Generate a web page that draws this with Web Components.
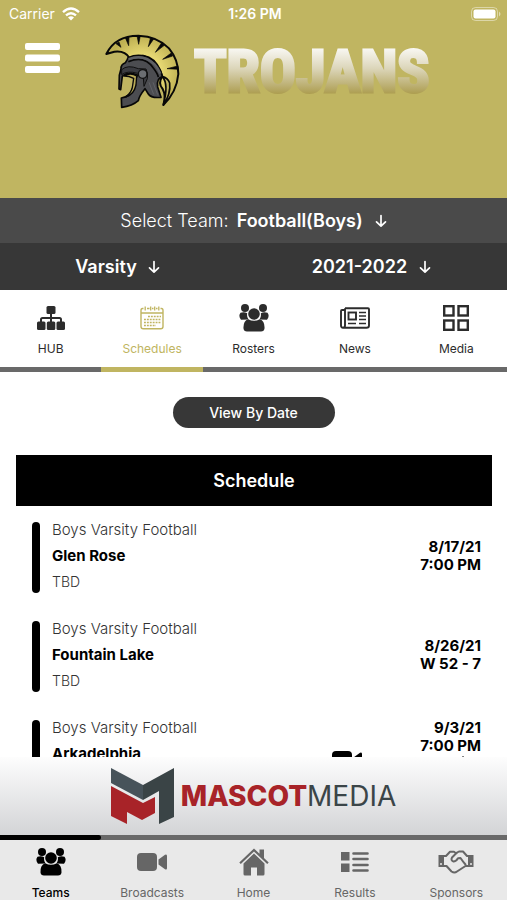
<!DOCTYPE html>
<html lang="en">
<head>
<meta charset="utf-8">
<meta name="viewport" content="width=device-width, initial-scale=1">
<title>Trojans</title>
<style>
  body {
    margin: 0;
    font-family: Inter, "Liberation Sans", sans-serif;
    color: #000;
    --gold: #c0b561;
    --dark: #373737;
    --line: #696969;
  }
</style>
</head>
<body>
<trojans-app></trojans-app>

<script>
// Icon drawings, each with its own viewBox
const icons = {
  wifi: ['0 0 18 14', `<g fill="none" stroke="currentColor" stroke-width="2.4"><path d="M1 5.2Q9-2 17 5.2"/><path d="M4 8.4Q9 4 14 8.4"/></g><path d="M6 10.4Q9 8 12 10.4L9 13.6Z"/>`],
  battery: ['0 0 30 14', `<rect x=".5" y=".5" width="26" height="13" rx="4" fill="none" stroke="currentColor" opacity=".45"/><rect x="2.5" y="2.5" width="22" height="9" rx="2"/><path d="M28 4.5q3 2.5 0 5z" opacity=".5"/>`],
  menu: ['0 0 35 30', `<rect width="35" height="7" rx="2"/><rect y="11.5" width="35" height="7" rx="2"/><rect y="23" width="35" height="7" rx="2"/>`],
  down: ['0 0 12 14', `<path d="M6 1.5V12M1.5 7.8L6 12.2L10.5 7.8" fill="none" stroke="currentColor" stroke-width="1.7" stroke-linecap="round" stroke-linejoin="round"/>`],
  hub: ['0 0 28 24', `<rect x="9.500" y="0" width="9" height="8" rx="1.5"/><rect x="0" y="15.500" width="8.500" height="8.500" rx="1.5"/><rect x="9.800" y="15.500" width="8.500" height="8.500" rx="1.5"/><rect x="19.500" y="15.500" width="8.500" height="8.500" rx="1.5"/><path d="M14 7V17M4 17V13.5Q4 12 5.500 12H22.500Q24 12 24 13.500V17" fill="none" stroke="currentColor" stroke-width="2"/>`],
  calendar: ['0 0 24 24', `<g fill="none" stroke="currentColor"><path d="M3.500 2.500H2.500Q1 2.500 1 4.500V20.500Q1 22.800 3.300 22.800H20.700Q23 22.800 23 20.500V4.500Q23 2.500 21.500 2.500H20.500M7 2.500H9.500M12 2.500H13.500M16 2.500H17.500M1 7H23" stroke-width="1.400"/><path d="M5.200 .5V4.500M10.700 .5V4.500M14.700 .5V4.500M18.800 .5V4.500" stroke-width="1.300"/><path d="M8 10.500H21M4 13.500H21M4 16.500H21M4 19.500H16" stroke-width="1.700" stroke-dasharray="1.900 1"/></g>`],
  people: ['0 0 30 28', `<circle cx="6" cy="4" r="4"/><circle cx="24" cy="4" r="4"/><path d="M1.500 8.800Q5 7.500 8.200 9.200Q7.500 13 9.500 15.500L2 15.700Q-1 12 1.500 8.800ZM28.500 8.800Q25 7.500 21.800 9.200Q22.500 13 20.500 15.500L28 15.700Q31 12 28.500 8.800Z"/><circle cx="15" cy="10" r="5.800"/><path d="M9.200 15.200Q15 18.500 20.800 15.200Q26 17 25.500 24.500Q25.200 27.500 22 27.500H8Q4.800 27.500 4.500 24.500Q4 17 9.200 15.200Z"/>`],
  news: ['0 0 30 22', `<g fill="none" stroke="currentColor"><path d="M5 1.200H28Q29 1.200 29 2.200V18.500Q29 20.800 26.500 20.800H3Q1 20.800 1 18.500V4Q1 3 2 3H5M5 1.200V18.500Q5 20.500 3 20.800" stroke-width="1.900"/><rect x="8.500" y="5.500" width="7.500" height="7" stroke-width="1.900"/><path d="M19 5.500H26M19 9H26M19 12.500H26M8 16.500H16M19 16.500H26" stroke-width="1.700"/></g>`],
  grid: ['0 0 26 26', `<g fill="none" stroke="currentColor" stroke-width="2.400"><rect x="1.200" y="1.200" width="9.300" height="9.300"/><rect x="15.500" y="1.200" width="9.300" height="9.300"/><rect x="1.200" y="15.500" width="9.300" height="9.300"/><rect x="15.500" y="15.500" width="9.300" height="9.300"/></g>`],
  video: ['0 0 30 18', `<rect width="20" height="18" rx="4"/><path d="M21.500 6.500L28 1.800Q30 .8 30 3V15Q30 17.200 28 16.200L21.500 11.500Z"/>`],
  home: ['0 0 30 28', `<path d="M15 .5L.3 14.500L1.800 16L15 3.500L28.200 16L29.700 14.500L25 10V1.500H20.500V5.700Z"/><path d="M15 5.500L4.500 15.500V26Q4.500 27.500 6 27.500H12V19.500H18V27.500H24Q25.500 27.500 25.500 26V15.500Z"/>`],
  results: ['0 0 28 20', `<rect width="8.500" height="8.500"/><rect y="11.500" width="8.500" height="8.500"/><path d="M12.500 1.500H26.500M12.500 7H26.500M12.500 13H26.500M12.500 18.500H26.500" stroke="currentColor" stroke-width="2.600" stroke-linecap="round"/>`],
  handshake: ['0 0 36 24', `<path d="M.5 5H6V17H.5ZM30 5H35.500V17H30Z"/><circle cx="3" cy="14" r="1" fill="#e9e9e9"/><circle cx="33" cy="14" r="1" fill="#e9e9e9"/><g fill="none" stroke="currentColor" stroke-width="2" stroke-linejoin="round" stroke-linecap="round"><path d="M6 6H8L12 1.800H16L18 3.200L21 1.500H25L29 6H30M6 16H8.500L13.500 21.500Q16.500 23.500 19 21.500L27.500 16H30"/><path d="M18.500 3L14 7.500Q12.500 10.500 15.500 11.500Q18 11.500 20 8.200L22.500 8Q24.500 11 27.500 14.500"/></g>`],
  ticket: ['0 0 34 30', `<path d="M16 1L19 4Q18 7 21 8L24 7L30 13L15 28L9 22Q11 19 8 17L2 16Z"/>`]
};

// Attach an open shadow root filled from a template
const attach = (el, html) => {
  const template = document.createElement("template");
  template.innerHTML = html;
  el.attachShadow({ mode: "open" });
  el.shadowRoot.appendChild(template.content.cloneNode(true));
};

class AppIcon extends HTMLElement {
  connectedCallback() {
    if (this.shadowRoot) return;
    const [box, shapes] = icons[this.getAttribute("name")];
    const [, , w, h] = box.split(" ");
    attach(this, `
      <style>
        :host { display: inline-flex; flex: none; }
        svg { display: block; fill: currentColor; }
      </style>
      <svg viewBox="${box}" width="${w}" height="${h}" aria-hidden="true">${shapes}</svg>
    `);
  }
}
customElements.define("app-icon", AppIcon);

class StatusBar extends HTMLElement {
  constructor() {
    super();
    attach(this, `
      <style>
        :host {
          display: grid;
          grid-template-columns: 1fr auto 1fr;
          align-items: center;
          height: 27px;
          padding: 0 6px 0 9px;
          font-size: 14px;
          color: #fff;
        }
        .carrier { display: flex; align-items: center; gap: 7px; }
        .time { font-weight: 600; }
        .battery { display: flex; justify-content: flex-end; }
      </style>
      <div class="carrier"><span>Carrier</span><app-icon name="wifi"></app-icon></div>
      <div class="time">1:26 PM</div>
      <div class="battery"><app-icon name="battery"></app-icon></div>
    `);
  }
}
customElements.define("status-bar", StatusBar);

class TeamHeader extends HTMLElement {
  constructor() {
    super();
    attach(this, `
      <style>
        :host { display: block; height: 198px; background: var(--gold); }
        .row { display: flex; align-items: flex-start; padding: 7px 25px; }
        button {
          margin: 9px 45px 0 0;
          padding: 0;
          border: 0;
          background: none;
          color: #fff;
          display: flex;
        }
        .helmet { flex: none; margin-right: 12px; }
        .name { flex: none; }
      </style>
      <status-bar></status-bar>
      <div class="row">
        <button type="button" aria-label="Menu"><app-icon name="menu"></app-icon></button>
        <svg class="helmet" viewBox="30 25 225 225" width="75" height="75" aria-hidden="true">
          <defs>
            <radialGradient id="crest" gradientUnits="userSpaceOnUse" cx="145" cy="140" r="110">
              <stop offset=".5" stop-color="#e6d873"/><stop offset="1" stop-color="#beb052"/>
            </radialGradient>
          </defs>
          <path d="M34 85Q60 30 130 30Q188 32 222 68Q250 102 250 145Q245 200 205 238Q214 210 203 190Q188 172 202 152L196 135Q180 96 145 90L103 96Q90 74 58 78Z" fill="url(#crest)" stroke="#080808" stroke-width="6" stroke-linejoin="round"/>
          <path d="M202 153Q222 175 205 238Q228 205 224 172Q218 156 202 153Z" fill="#c0b561" stroke="#080808" stroke-width="5"/>
          <path d="M63 54L78 65L72 49ZM91 36L101 60L102 34ZM126 30L131 56L136 30ZM167 35L160 63L176 40ZM200 51L181 80L208 59ZM229 82L203 101L233 91ZM248 121L216 129L250 131Z" fill="#080808" stroke="#080808" stroke-width="2"/>
          <path d="M78 130Q77 116 91 111Q98 101 99 96Q140 78 175 106Q196 126 202 153Q184 158 188 184L198 215Q168 218 160 205L150 189Q132 211 130 225Q112 241 80 245L79 217Q107 213 112 190L127 148Q99 136 82 151L77 192L72 190L73 149Z" fill="#4c4d51" stroke="#080808" stroke-width="5" stroke-linejoin="round"/>
          <path d="M100 108Q148 88 175 127Q188 144 190 154" fill="none" stroke="#080808" stroke-width="5"/>
          <path d="M101 100Q147 84 179 116Q191 130 196 144" fill="none" stroke="#5e6064" stroke-width="7"/>
          <path d="M80 132Q98 116 130 129L153 130Q160 143 157 159L147 182L145 157L128 143Q97 134 80 147Z" fill="#3b3c41" stroke="#101010" stroke-width="3"/>
          <path d="M85 151Q107 139 125 151L123 178Q117 207 92 214Q112 199 113 179L116 158Q100 150 85 151Z" fill="#b9aa58" stroke="#080808" stroke-width="4"/>
          <circle cx="143" cy="145" r="13" fill="#6b6e72" stroke="#111" stroke-width="4"/>
          <path d="M162 170L176 206M174 170L188 207" stroke="#606166" stroke-width="3"/>
        </svg>
        <svg class="name" viewBox="0 0 240 76" width="240" height="76">
          <defs>
            <linearGradient id="fade" gradientUnits="userSpaceOnUse" x1="0" y1="10" x2="0" y2="64">
              <stop offset="0" stop-color="#fff"/><stop offset=".45" stop-color="#dcd6ba"/><stop offset="1" stop-color="#a5943f"/>
            </linearGradient>
          </defs>
          <text x="2" y="58" font-family="'Liberation Sans Narrow', 'Roboto Condensed', 'Liberation Sans', sans-serif" font-size="60" font-weight="700" fill="url(#fade)" stroke="url(#fade)" stroke-width="3">TROJANS</text>
        </svg>
      </div>
    `);
  }
}
customElements.define("team-header", TeamHeader);

// Drop-down with a small arrow, its label is either shown or spoken only
class PickerField extends HTMLElement {
  connectedCallback() {
    if (this.shadowRoot) return;
    const label = this.getAttribute("label");
    const shown = this.hasAttribute("show-label");
    attach(this, `
      <style>
        :host { display: flex; align-items: center; justify-content: center; font-size: 18px; line-height: 24px; color: #fff; }
        label { margin-right: 8px; font-weight: 300; }
        select {
          appearance: none;
          margin: 0 11px 0 0;
          padding: 0;
          border: 0;
          background: none;
          font: inherit;
          font-weight: 600;
          color: inherit;
        }
      </style>
      ${shown ? `<label for="pick">${label}</label>` : ""}
      <select id="pick" ${shown ? "" : `aria-label="${label}"`}><option>${this.getAttribute("value")}</option></select>
      <app-icon name="down"></app-icon>
    `);
  }
}
customElements.define("picker-field", PickerField);

class TeamPicker extends HTMLElement {
  constructor() {
    super();
    attach(this, `
      <style>
        :host { display: block; }
        .team { background: #4a4a4a; height: 45px; display: grid; }
        .season { background: var(--dark); height: 47px; display: grid; grid-template-columns: 1fr 1fr; }
        .season picker-field { padding-right: 18px; }
      </style>
      <div class="team"><picker-field label="Select Team:" show-label value="Football(Boys)"></picker-field></div>
      <div class="season">
        <picker-field label="Level" value="Varsity"></picker-field>
        <picker-field label="Season" value="2021-2022"></picker-field>
      </div>
    `);
  }
}
customElements.define("team-picker", TeamPicker);

class TabItem extends HTMLElement {
  connectedCallback() {
    if (this.shadowRoot) return;
    attach(this, `
      <style>
        :host { display: block; flex: 1 1 0; min-width: 0; color: var(--tab-color, #2c2c2c); }
        :host([active]) { color: var(--tab-active); }
        a {
          display: flex;
          flex-direction: column;
          align-items: center;
          text-decoration: none;
          color: inherit;
          font-size: 12px;
          line-height: 16px;
        }
        .icon { height: 28px; display: flex; align-items: center; margin: var(--tab-pad) 0 var(--tab-gap); }
        :host([active]) .label { font-weight: var(--tab-weight, 400); }
      </style>
      <a href="#">
        <span class="icon"><app-icon name="${this.getAttribute("icon")}"></app-icon></span>
        <span class="label"><slot></slot></span>
      </a>
    `);
  }
}
customElements.define("tab-item", TabItem);

class TabBar extends HTMLElement {
  constructor() {
    super();
    attach(this, `
      <style>
        :host { display: block; flex: none; background: #fff; --tab-active: var(--gold); --tab-pad: 14px; --tab-gap: 9px; }
        :host([bottom]) { background: #e9e9e9; --tab-color: #666; --tab-active: #000; --tab-pad: 8px; --tab-gap: 9px; --tab-weight: 500; }
        nav { display: flex; height: 77px; }
        :host([bottom]) nav { height: 60px; }
        .wrap { display: flex; flex-direction: column; }
        :host([bottom]) .wrap { flex-direction: column-reverse; }
        .track { height: 5px; background: var(--line); }
        .mark { width: 20%; height: 5px; background: var(--tab-active); margin-left: var(--mark, 0); }
        :host([bottom]) .mark { border-radius: 0 3px 3px 0; }
      </style>
      <div class="wrap">
        <nav><slot></slot></nav>
        <div class="track"><div class="mark"></div></div>
      </div>
    `);
  }
}
customElements.define("tab-bar", TabBar);

class GameRow extends HTMLElement {
  constructor() {
    super();
    attach(this, `
      <style>
        :host { display: flex; align-items: center; height: 71px; margin-bottom: 28px; }
        .bar { width: 8px; height: 71px; border-radius: 4px; background: #000; margin-right: 12px; }
        .info { flex: 1; padding-bottom: 3px; font-size: 15px; line-height: 26px; color: #333; font-weight: 300; }
        .info div { height: 26px; }
        .info .place { font-size: 14px; }
        .info .opponent { font-weight: 700; color: #000; }
        .video { width: 28px; padding-top: 12px; margin-right: 60px; }
        .when { min-width: 60px; padding-bottom: 4px; text-align: right; font-size: 15px; line-height: 18px; font-weight: 700; }
      </style>
      <div class="bar"></div>
      <div class="info">
        <div>Boys Varsity Football</div>
        <div class="opponent"><slot name="opponent"></slot></div>
        <div class="place"><slot name="place"></slot></div>
      </div>
      <div class="video"><slot name="video"></slot></div>
      <div class="when">
        <div><slot name="date"></slot></div>
        <div><slot name="result"></slot></div>
        <slot name="extra"></slot>
      </div>
    `);
  }
}
customElements.define("game-row", GameRow);

class ScheduleList extends HTMLElement {
  constructor() {
    super();
    attach(this, `
      <style>
        :host { display: block; flex: 1 1 0; min-height: 0; overflow: auto; scrollbar-width: none; background: #fff; }
        button {
          display: block;
          margin: 25px auto 27px;
          width: 162px;
          height: 31px;
          border: 0;
          border-radius: 16px;
          background: var(--dark);
          color: #fff;
          font: 500 14px Inter, "Liberation Sans", sans-serif;
        }
        section { margin: 0 15px 0 16px; }
        h2 {
          margin: 0 0 16px;
          background: #000;
          color: #fff;
          text-align: center;
          font-size: 18px;
          font-weight: 600;
          line-height: 51px;
        }
        .games { padding: 0 11px 0 16px; }
      </style>
      <button type="button">View By Date</button>
      <section>
        <h2>Schedule</h2>
        <div class="games"><slot></slot></div>
      </section>
    `);
  }
}
customElements.define("schedule-list", ScheduleList);

class SponsorBanner extends HTMLElement {
  constructor() {
    super();
    attach(this, `
      <style>
        :host {
          display: flex;
          flex: none;
          align-items: center;
          justify-content: center;
          height: 78px;
          background: linear-gradient(#fdfdfd, #d3d4d6);
        }
        svg { flex: none; margin-right: 6px; }
        .word { font-size: 28px; line-height: 34px; color: #3b4548; }
        b { color: #a82328; font-weight: 800; }
      </style>
      <svg viewBox="0 0 64 58" width="64" height="58" aria-hidden="true">
        <path d="M0 1L32 18V33L0 16Z" fill="#47535a"/>
        <path d="M32 18L63 1V50L48 57V24L32 33Z" fill="#3a4446"/>
        <path d="M0 19L32 36L44 30V46L31 53L16 45V57L0 49Z" fill="#a82328"/>
      </svg>
      <div class="word"><b>MASCOT</b>MEDIA</div>
    `);
  }
}
customElements.define("sponsor-banner", SponsorBanner);

class TrojansApp extends HTMLElement {
  constructor() {
    super();
    attach(this, `
      <style>
        :host { display: flex; flex-direction: column; height: 100vh; }
        team-header, team-picker { flex: none; }
        .sections { --mark: 20%; }
      </style>
      <team-header></team-header>
      <team-picker></team-picker>
      <tab-bar class="sections">
        <tab-item icon="hub">HUB</tab-item>
        <tab-item icon="calendar" active>Schedules</tab-item>
        <tab-item icon="people">Rosters</tab-item>
        <tab-item icon="news">News</tab-item>
        <tab-item icon="grid">Media</tab-item>
      </tab-bar>
      <schedule-list>
        <game-row>
          <span slot="opponent">Glen Rose</span>
          <span slot="place">TBD</span>
          <span slot="date">8/17/21</span>
          <span slot="result">7:00 PM</span>
        </game-row>
        <game-row>
          <span slot="opponent">Fountain Lake</span>
          <span slot="place">TBD</span>
          <span slot="date">8/26/21</span>
          <span slot="result">W 52 - 7</span>
        </game-row>
        <game-row>
          <span slot="opponent">Arkadelphia</span>
          <app-icon slot="video" name="video"></app-icon>
          <span slot="date">9/3/21</span>
          <span slot="result">7:00 PM</span>
          <app-icon slot="extra" name="ticket"></app-icon>
        </game-row>
      </schedule-list>
      <sponsor-banner></sponsor-banner>
      <tab-bar bottom>
        <tab-item icon="people" active>Teams</tab-item>
        <tab-item icon="video">Broadcasts</tab-item>
        <tab-item icon="home">Home</tab-item>
        <tab-item icon="results">Results</tab-item>
        <tab-item icon="handshake">Sponsors</tab-item>
      </tab-bar>
    `);
  }
}
customElements.define("trojans-app", TrojansApp);
</script>
</body>
</html>
